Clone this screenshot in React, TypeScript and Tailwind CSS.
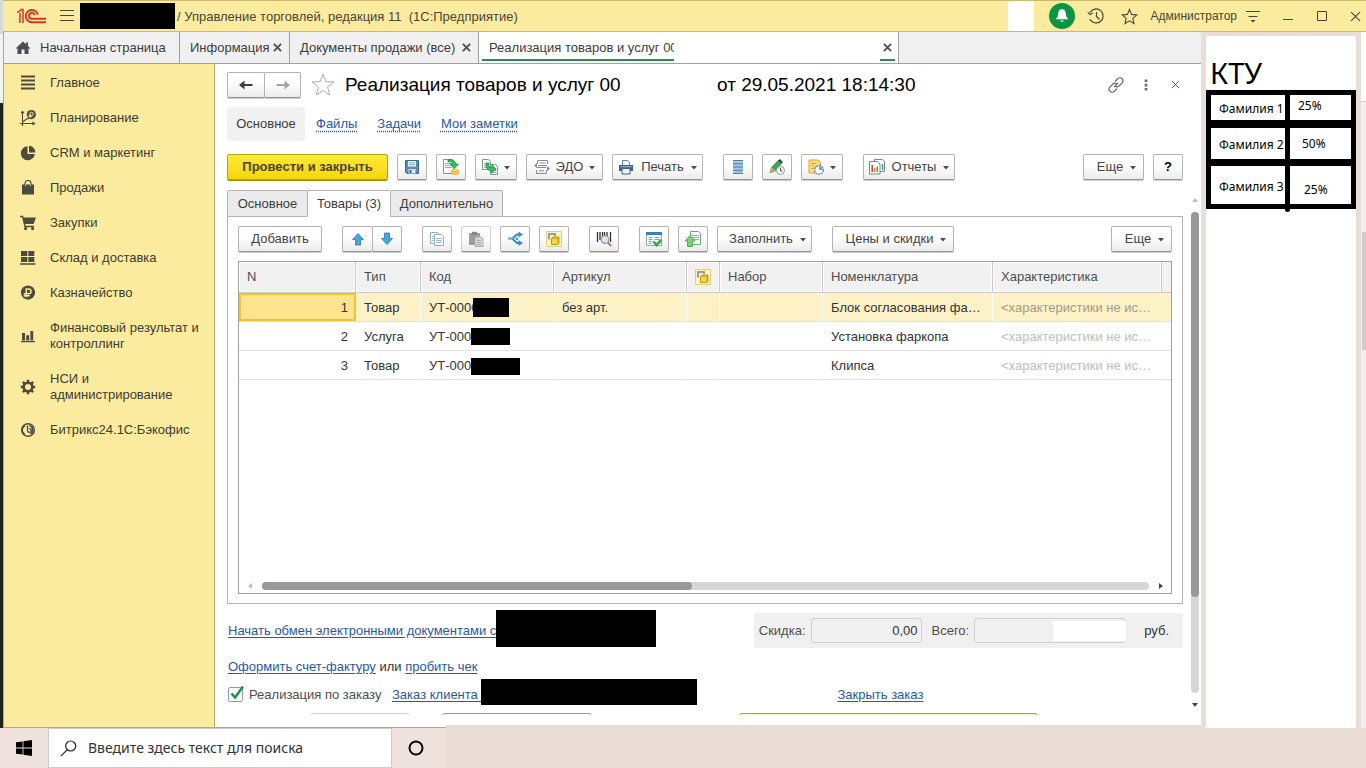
import React, { type ReactNode } from "react";

const Svg = ({ children, size = 16, box = 16, className = "" }: { children: ReactNode; size?: number; box?: number; className?: string }) => (
  <svg width={size} height={size} viewBox={`0 0 ${box} ${box}`} fill="none" className={`shrink-0 ${className}`} aria-hidden="true">
    {children}
  </svg>
);

const Logo = () => (
  <svg width="30" height="16" viewBox="0 0 30 16" fill="none" stroke="#d0392b" strokeWidth="1.9" className="shrink-0" aria-hidden="true">
    <path d="M0 4.600 3.800 2.200M2.900 4.800V15M3.200 1.600H6V15" strokeWidth="1.500" />
    <path d="M20.800 6.800A6.100 6.100 0 1 0 14.800 14.200H29" />
    <path d="M17.700 7.200A2.900 2.900 0 1 0 14.800 10.800H29" />
  </svg>
);

const Cross = ({ size = 9, width = 2, color = "#4d4d4d" }: { size?: number; width?: number; color?: string }) => (
  <Svg size={size} box={10}>
    <path d="M1 1 9 9M9 1 1 9" stroke={color} strokeWidth={width} />
  </Svg>
);

const Caret = () => (
  <svg width="6" height="4" viewBox="0 0 6 4" className="mt-[2px] shrink-0" aria-hidden="true">
    <path d="M0 0h6L3 3.6z" fill="#4a4a4a" />
  </svg>
);

const Ruble = ({ x, y, r, bg }: { x: number; y: number; r: number; bg: string }) => (
  <g>
    <circle cx={x} cy={y} r={r} fill="#4d4a42" />
    <path
      d={`M${x - r * 0.25} ${y + r * 0.65}V${y - r * 0.5}h${r * 0.35}a${r * 0.3} ${r * 0.3} 0 0 1 0 ${r * 0.66}H${x - r * 0.6}M${x - r * 0.6} ${y + r * 0.45}h${r * 0.85}`}
      stroke={bg}
      strokeWidth={r * 0.2}
    />
  </g>
);

const Y = "#faeb9e";
const D = "#4d4a42";

const sections: { label: string; icon: ReactNode }[] = [
  { label: "Главное", icon: <path d="M1 1.500h14M1 5.500h14M1 9.500h14M1 13.500h14" stroke={D} strokeWidth="1.9" /> },
  {
    label: "Планирование",
    icon: (
      <>
        <path d="M2.5 1.5V16M0 13.5h14M2.5 12l4-3 3-.5" stroke={D} strokeWidth="1.1" />
        <path d="M.3 3.2 2.5.5l2.2 2.7zM12.5 11.3l3 2.2-3 2.2z" fill={D} />
        <Ruble x={11.3} y={4.6} r={4.6} bg={Y} />
      </>
    ),
  },
  {
    label: "CRM и маркетинг",
    icon: (
      <>
        <path d="M7.5 1.3a7 7 0 1 0 7.3 7.6H7.5z" fill={D} />
        <path d="M9 .8V7.4h6.4A6.8 6.8 0 0 0 9 .8z" fill={D} />
      </>
    ),
  },
  {
    label: "Продажи",
    icon: (
      <>
        <path d="M2 4.500h12v10H2z" fill={D} />
        <path d="M5 6.500V3.500a3 3 0 0 1 6 0v3" stroke={D} strokeWidth="1.1" />
        <path d="M5.5 4.500v2M10.5 4.500v2" stroke={Y} strokeWidth=".7" />
      </>
    ),
  },
  {
    label: "Закупки",
    icon: (
      <>
        <path d="M3 2.6h13L13.6 9H4.8z" fill={D} />
        <path d="M0 1.5h2.6l2.4 10h9" stroke={D} strokeWidth="1.3" />
        <circle cx="5.6" cy="13.6" r="1.6" fill={D} />
        <circle cx="12.6" cy="13.6" r="1.6" fill={D} />
      </>
    ),
  },
  {
    label: "Склад и доставка",
    icon: <path d="M1 1h6.300v5H1zM8.300 1h6v5h-6zM1 7h6.300v5H1zM8.300 7h6v5h-6zM0 13.200h15.500v1.600H0z" fill={D} />,
  },
  { label: "Казначейство", icon: <Ruble x={8} y={7.6} r={7.1} bg={Y} /> },
  {
    label: "Финансовый результат и контроллинг",
    icon: <path d="M2 5h3v7.500H2zM6.200 7.300h3v5.200h-3zM10.400 3h2.800v9.500h-2.800zM1 13h14v1.300H1z" fill={D} />,
  },
  {
    label: "НСИ и администрирование",
    icon: (
      <>
        <circle cx="8" cy="8" r="4.3" stroke={D} strokeWidth="2.6" />
        <path d="M8 .8v2.4M8 12.8v2.4M.8 8h2.4M12.8 8h2.4M2.9 2.9l1.7 1.7M11.4 11.4l1.7 1.7M2.9 13.1l1.7-1.7M11.4 4.6l1.7-1.7" stroke={D} strokeWidth="2.5" />
      </>
    ),
  },
  {
    label: "Битрикс24.1С:Бэкофис",
    icon: (
      <>
        <circle cx="8" cy="8" r="6.3" stroke={D} strokeWidth="1.5" />
        <path d="M7.500 3.600v4.600a1.900 1.900 0 1 0 1.600-1.600M5 3.600a5 5 0 0 0-.2 8.800M9.400 3.600a4.600 4.600 0 0 1 1 8.400" stroke={D} strokeWidth="1.300" />
      </>
    ),
  },
];

const btn =
  "flex h-[26px] shrink-0 items-center justify-center rounded-[2px] border border-[#b3b3b3] border-b-[#959595] bg-linear-to-b from-white from-40% to-[#ececec] text-[#444] shadow-[0_1px_0_#ccc]";

const IconButton = ({ label, children, className = "" }: { label: string; children: ReactNode; className?: string }) => (
  <button type="button" aria-label={label} className={`${btn} w-[30px] ${className}`}>
    <Svg>{children}</Svg>
  </button>
);

const TextButton = ({ children, className }: { children: ReactNode; className: string }) => (
  <button type="button" className={`${btn} ${className}`}>
    {children}
  </button>
);

const Cubes = () => (
  <>
    <path d="M.5.5h15v15H.5z" fill="#fff3c4" stroke="#e3cd7c" />
    <path d="M3 8.500V3h6v2" stroke="#9b9b9b" strokeWidth="2" />
    <path d="M5.5 7.500 7 6h6v6l-1.500 1.500h-6z" fill="#e9b914" stroke="#a8860f" strokeWidth=".8" />
    <path d="M6.200 8.200h4.800v4.700H6.200z" fill="#ffd84a" />
  </>
);

const Doc = ({ x = 1, y = 1, w = 9, h = 12, c = "#7d929e", fill = "#fff" }: { x?: number; y?: number; w?: number; h?: number; c?: string; fill?: string }) => (
  <g stroke={c}>
    <path d={`M${x + 0.5} ${y + 0.5}h${w - 3}l2 2v${h - 3}h-${w - 1}z`} fill={fill} />
    <path d={`M${x + 2} ${y + 4.5}h${w - 4}M${x + 2} ${y + 6.5}h${w - 4}M${x + 2} ${y + 8.5}h${w - 4}`} strokeWidth=".8" />
  </g>
);

const link = "text-[#2a58a6] underline underline-offset-2";

const rows = [
  { n: 1, type: "Товар", code: "УТ-0000", clip: "w-[44px]", mask: "h-[19px] w-[36px]", art: "без арт.", name: "Блок согласования фа…" },
  { n: 2, type: "Услуга", code: "УТ-000", clip: "", mask: "h-[17px] w-[39px]", art: "", name: "Установка фаркопа" },
  { n: 3, type: "Товар", code: "УТ-000", clip: "", mask: "mt-[3px] h-[17px] w-[49px]", art: "", name: "Клипса" },
];

const TitleBar = () => (
  <header className="flex h-8 shrink-0 items-center border-y border-[#c9b96c] bg-[#faeb9e] pr-[5px] pl-[14px] text-[#4a4636]">
    <Logo />
    <button type="button" aria-label="Меню" className="ml-[12px]">
      <Svg>
        <path d="M1 2.500h14M1 7.500h14M1 12.500h14" stroke="#4a4636" />
      </Svg>
    </button>
    <div className="ml-[5px] h-[26px] w-[95px] bg-black" />
    <h1 className="ml-[2px] pt-[2px] text-[13px] whitespace-pre">/ Управление торговлей, редакция 11  (1С:Предприятие)</h1>
    <div className="ml-auto h-[30px] w-[26px] bg-white" />
    <button type="button" aria-label="Уведомления" className="ml-[15px] flex size-[26px] items-center justify-center rounded-full bg-[#0b9444]">
      <Svg>
        <path d="M8 1.200c-3 0-3.700 2.300-3.900 4.800C4 9 2.800 9.800 1.600 11.300h12.800C13.200 9.800 12 9 11.900 6 11.700 3.500 11 1.200 8 1.200zM6.200 12.500a1.900 1.900 0 0 0 3.600 0z" fill="#fff" />
      </Svg>
    </button>
    <button type="button" aria-label="История" className="ml-[12px]">
      <Svg size={18} box={18}>
        <path d="M3 5.500A7 7 0 1 1 2.800 12M9.500 5v4.500l3 3M.8 5l2 2.500L5.800 6" stroke="#4a4636" strokeWidth="1.200" />
      </Svg>
    </button>
    <button type="button" aria-label="Избранное" className="ml-[16px]">
      <Svg size={17} box={17}>
        <path d="m8.500 1.500 2.100 4.900 5.200.5-4 3.500 1.200 5.200-4.500-2.800L4 15.600l1.200-5.200-4-3.500 5.200-.5z" stroke="#4a4636" strokeWidth="1.100" />
      </Svg>
    </button>
    <span className="ml-[12px] text-[12px]">Администратор</span>
    <button type="button" aria-label="Сервис" className="ml-[8px]">
      <Svg>
        <path d="M1 3.500h14M3.500 8.500h9" stroke="#4a4636" strokeWidth="1.200" />
        <path d="M5.500 12h5L8 14.600z" fill="#4a4636" />
      </Svg>
    </button>
    <button type="button" aria-label="Свернуть" className="ml-[22px]">
      <Svg size={10} box={10}>
        <path d="M0 8.500h10" stroke="#4a4636" />
      </Svg>
    </button>
    <button type="button" aria-label="Развернуть" className="ml-[24px]">
      <Svg size={10} box={10}>
        <path d="M.5.500h9v9h-9z" stroke="#4a4636" />
      </Svg>
    </button>
    <button type="button" aria-label="Закрыть" className="ml-[23px]">
      <Cross size={11} width={1} color="#4a4636" />
    </button>
  </header>
);

const WindowTabs = () => (
  <nav className="flex h-8 shrink-0 items-stretch border-b border-[#a0a0a0] bg-[#f0f0f0] text-[#3c3c3c]">
    <button type="button" className="flex w-[176px] items-center gap-[9px] border-r border-[#a0a0a0] pl-[11px]">
      <Svg>
        <path d="M8 1.500.500 8.500h2V14H6.500V9.500h3V14h4V8.500h2L13 6V2.500h-2v1.700z" fill="#4d4d4d" />
      </Svg>
      Начальная страница
    </button>
    <button type="button" className="flex w-[110px] items-center justify-between border-r border-[#a0a0a0] pr-[7px] pl-[10px]">
      Информация <Cross />
    </button>
    <button type="button" className="flex w-[189px] items-center justify-between border-r border-[#a0a0a0] pr-[7px] pl-[10px] whitespace-nowrap">
      Документы продажи (все) <Cross />
    </button>
    <button type="button" className="flex w-[420px] items-stretch justify-between border-r border-[#a0a0a0] bg-white pr-[3px] pb-[2px] pl-[3px]">
      <span className="flex w-[192px] items-center overflow-hidden border-b-2 border-[#2b8a57] pt-[4px] pl-[7px] text-left whitespace-nowrap">Реализация товаров и услуг 00</span>
      <span className="flex w-[15px] items-center justify-center border-b-2 border-[#2b8a57] pt-[4px]">
        <Cross />
      </span>
    </button>
  </nav>
);

const Sidebar = () => (
  <nav className="flex w-[211px] shrink-0 flex-col gap-[19px] border-r border-b border-[#b9ab62] bg-[#faeb9e] pt-[11px] pl-[16px]">
    {sections.map((s) => (
      <a key={s.label} href="#" className="flex items-center gap-[14px] pr-[9px] leading-4 text-[#3f3c30]">
        <Svg>{s.icon}</Svg>
        <span>{s.label}</span>
      </a>
    ))}
  </nav>
);

const CommandBar = () => (
  <div className="mt-[13px] flex items-center gap-[9px]">
    <button type="button" className="h-[26px] w-[161px] shrink-0 rounded-[2px] border border-[#bca100] bg-linear-to-b from-[#ffe933] to-[#f5d800] text-[13px] font-bold whitespace-nowrap text-[#4a4420] shadow-[0_1px_0_#a08a10]">
      Провести и закрыть
    </button>
    <IconButton label="Записать">
      <path d="M1.500 1.500h13v13H3l-1.500-1.500z" fill="#5b8cc0" stroke="#3a658f" />
      <path d="M4 2h8v5.500H4z" fill="#e8f1fa" />
      <path d="M5 3.800h6M5 5.500h6" stroke="#8fb0cf" />
      <path d="M4.500 10h7v4.500h-7z" fill="#dce6ee" />
      <path d="M5.500 11h2v3h-2z" fill="#3a658f" />
    </IconButton>
    <IconButton label="Провести">
      <Doc x={0} y={0} w={11} h={15} />
      <path d="M5 .800c4-1 7.500.5 7.500 4.200h3L11.200 9.500 7.200 5h2.300c0-1.800-1.500-2.500-4.500-2z" fill="#2fbf57" stroke="#138a3c" strokeWidth=".7" />
      <ellipse cx="12" cy="11.500" rx="3.500" ry="1.300" fill="#ffe477" stroke="#d3a92c" strokeWidth=".7" />
      <path d="M8.500 11.500v3c0 1.400 7 1.400 7 0v-3c0 1.400-7 1.400-7 0z" fill="#f7c948" stroke="#d3a92c" strokeWidth=".6" />
    </IconButton>
    <TextButton className="w-[42px] gap-[6px]">
      <Svg>
        <Doc x={0} y={0} w={9} h={11} />
        <Doc x={8} y={5} w={8} h={11} />
        <path d="M4 4h3v4h3V5.500l4 5-5 3.500v-2.500C6 11.500 4 10 4 4z" fill="#35bd5c" stroke="#168a3d" strokeWidth=".7" />
      </Svg>
      <Caret />
    </TextButton>
    <TextButton className="w-[77px] gap-[6px]">
      <Svg>
        <path d="M3.500 5V1.500h10V5M2.500 11v3.500h10V11M5.500 4h6M4 6.500h9M3 8.500h9M5 11.800h5" stroke="#8a8a8a" />
        <path d="M0 6.500 3 4v5zM16 9.500 13 7v5z" fill="#8a8a8a" />
      </Svg>
      ЭДО
      <Caret />
    </TextButton>
    <TextButton className="w-[91px] gap-[7px]">
      <Svg>
        <path d="M4.500 6V1.500h5l2 2V6" fill="#fff" stroke="#5f7f9e" />
        <path d="M1 6h14v6H1z" fill="#3b6590" />
        <path d="M2.500 7.700h11" stroke="#9cb9d4" />
        <path d="M4 9.500h8V15H4z" fill="#e9f0f6" stroke="#3b6590" />
      </Svg>
      Печать
      <Caret />
    </TextButton>
    <IconButton label="Структура" className="ml-[11px]">
      <path d="M3 1h10v14H3z" fill="#a9c6df" />
      <path d="M3 1.500h10M3 4.800h10M3 8h10M3 11.300h10M3 14.500h10" stroke="#4f7ea8" />
    </IconButton>
    <IconButton label="Запланировать">
      <path d="m1 13.500 1.500-5L9 1.500l3.500 3-6.500 7.500z" fill="#3fa650" stroke="#2a7136" strokeWidth=".6" />
      <path d="m1 13.500 1.500-5 3.500 3z" fill="#e2a566" />
      <path d="M9 1.500 10.800 0 14 3l-1.500 1.500z" fill="#3e3e3e" />
      <circle cx="11.500" cy="11.500" r="4" fill="#fff" stroke="#8796a3" />
      <path d="M11.500 9v3h2" stroke="#555" />
    </IconButton>
    <TextButton className="w-[42px] gap-[6px]">
      <Svg>
        <path d="M1 1h9l2.500 2.500V14H1z" fill="#ffdf80" stroke="#d6a62b" />
        <path d="M3 4.500h5M3 7h4M3 9.500h3" stroke="#d6a62b" />
        <circle cx="11" cy="11" r="4.300" fill="#fff" stroke="#4b74a8" strokeWidth="1.200" strokeDasharray="2 .8" />
        <path d="M11 11V7.500A3.500 3.500 0 0 1 14.500 11z" fill="#6aa1d9" />
      </Svg>
      <Caret />
    </TextButton>
    <TextButton className="ml-[11px] w-[92px] gap-[7px]">
      <Svg>
        <path d="M5.500.500h8l2 2v10h-10z" fill="#fff" stroke="#6c8b9b" />
        <path d="M13.500 5v6" stroke="#4aa657" strokeWidth="1.500" />
        <path d="M.5 2.500h8l2.500 2.500v10H.500z" fill="#fff" stroke="#6c8b9b" />
        <path d="M3.200 13V6" stroke="#df3b3b" strokeWidth="1.600" />
        <path d="M5.800 13V9" stroke="#f08c3a" strokeWidth="1.600" />
        <path d="M8.300 13V7.500" stroke="#3fa650" strokeWidth="1.600" />
      </Svg>
      Отчеты
      <Caret />
    </TextButton>
    <TextButton className="ml-auto w-[61px] gap-[7px] pl-[6px]">
      Еще
      <Caret />
    </TextButton>
    <TextButton className="w-[30px] font-bold text-black">?</TextButton>
  </div>
);

const TableBar = () => (
  <div className="flex items-center gap-[9px]">
    <TextButton className="w-[84px]">Добавить</TextButton>
    <div className="ml-[11px] flex">
      <button type="button" aria-label="Вверх" className={`${btn} w-[31px]`}>
        <Svg>
          <path d="M8 2.500 13.500 8.500h-3V14h-5V8.500h-3z" fill="#3fa9e8" stroke="#2679b5" strokeWidth=".8" />
        </Svg>
      </button>
      <button type="button" aria-label="Вниз" className={`${btn} -ml-px w-[30px]`}>
        <Svg>
          <path d="M8 13.500 2.500 7.500h3V2h5v5.500h3z" fill="#3fa9e8" stroke="#2679b5" strokeWidth=".8" />
        </Svg>
      </button>
    </div>
    <IconButton label="Скопировать" className="ml-[11px]">
      <Doc x={1} y={1} w={10} h={12} c="#8fb0bd" />
      <Doc x={5} y={3} w={10} h={12} c="#8fb0bd" />
    </IconButton>
    <IconButton label="Вставить" className="border-[#d0d0d0]">
      <path d="M1 2h11v12H1z" fill="#a29b96" />
      <path d="M4 .800h5v3H4z" fill="#8a8582" />
      <path d="M7 6h6l2 2v7.500H7z" fill="#d5d9de" stroke="#a4aab2" />
      <path d="M9 9.500h4M9 11.500h4M9 13.500h4" stroke="#a4aab2" />
    </IconButton>
    <IconButton label="Разбить">
      <path d="M1 7.500h4.500L10 3.500h3M5 7.500 10 12h3" stroke="#2f8bc9" strokeWidth="2" />
      <path d="M11.500.500 15.800 3.500l-4.300 3zM11.500 9l4.300 3-4.300 3z" fill="#2f8bc9" />
      <path d="M1 7.500h7" stroke="#7cc0ea" strokeWidth=".8" />
      <circle cx="10" cy="7.700" r="1.200" fill="#2f8bc9" />
    </IconButton>
    <IconButton label="Наборы">
      <Cubes />
    </IconButton>
    <IconButton label="Поиск по штрихкоду" className="ml-[11px]">
      <path d="M1.500 1v10M4 1v8M6.500 1v4M8.500 1v3M11 1v4M14.500 1v10" stroke="#333" strokeWidth="1.300" />
      <circle cx="9" cy="8.500" r="3.900" fill="#dde6ef" stroke="#8b97a5" strokeWidth="1.100" />
      <path d="m12 11.500 3 3.500" stroke="#a8673c" strokeWidth="1.800" />
    </IconButton>
    <IconButton label="Проверить" className="ml-[11px]">
      <path d="M.500 1.500h15v13H.500z" fill="#fff" stroke="#8fa3b5" />
      <path d="M0 1h16v3H0z" fill="#3c7fc0" />
      <path d="M2.500 6.500h4M2.500 8.500h4M2.500 10.500h4M2.500 12.500h3" stroke="#9a9a9a" />
      <path d="M8.500 6.500h5M8.500 8.500h5" stroke="#e2797b" />
      <path d="m7.500 10.500 3 3.500 4.800-5" stroke="#3aa64a" strokeWidth="2.600" />
    </IconButton>
    <IconButton label="Загрузить">
      <Doc x={5} y={0} w={11} h={14} c="#63b065" />
      <path d="M5 4.500 9.800 10H7.500v5.500h-5V10H.200z" fill="#7ed36a" stroke="#3c9a3d" strokeWidth=".8" />
    </IconButton>
    <TextButton className="w-[95px] gap-[7px] pl-[6px]">
      Заполнить
      <Caret />
    </TextButton>
    <TextButton className="ml-[11px] w-[122px] gap-[7px] pl-[6px] whitespace-nowrap">
      Цены и скидки
      <Caret />
    </TextButton>
    <TextButton className="ml-auto w-[61px] gap-[7px] pl-[6px]">
      Еще
      <Caret />
    </TextButton>
  </div>
);

const th = "h-[31px] border-r border-b border-[#c9c9c9] bg-[#f1f1f1] px-2 text-left font-normal text-[#4d4d4d] overflow-hidden shadow-[inset_0_0_0_1px_#fff]";

const GoodsTable = () => (
  <table className="w-full table-fixed border-separate border-spacing-0">
    <colgroup>
      <col className="w-[117px]" />
      <col className="w-[65px]" />
      <col className="w-[133px]" />
      <col className="w-[133px]" />
      <col className="w-[33px]" />
      <col className="w-[103px]" />
      <col className="w-[170px]" />
      <col className="w-[169px]" />
      <col />
    </colgroup>
    <thead>
      <tr>
        <th className={th}>N</th>
        <th className={th}>Тип</th>
        <th className={th}>Код</th>
        <th className={th}>Артикул</th>
        <th className={th} aria-label="Комплект">
          <Svg>
            <Cubes />
          </Svg>
        </th>
        <th className={th}>Набор</th>
        <th className={th}>Номенклатура</th>
        <th className={th}>Характеристика</th>
        <th className="border-b border-[#c9c9c9] bg-[#f1f1f1]" />
      </tr>
    </thead>
    <tbody>
      {rows.map((r) => {
        const sel = r.n === 1;
        const td = `h-[29px] overflow-hidden whitespace-nowrap border-b border-[#e2e2e2] px-2 pt-[2px] ${sel ? "border-r border-r-white bg-[#fdf1c8]" : "border-r border-r-transparent"}`;
        return (
          <tr key={r.n} className="text-[#333]">
            <td className={`h-[29px] border-b border-[#e2e2e2] px-2 pt-[2px] text-right ${sel ? "bg-[#ffe48e] shadow-[inset_0_0_0_2px_#f2c42c]" : ""}`}>{r.n}</td>
            <td className={td}>{r.type}</td>
            <td className={`h-[29px] border-b border-[#e2e2e2] px-2 whitespace-nowrap ${sel ? "border-r border-r-white bg-[#fdf1c8]" : "border-r border-r-transparent"}`}>
              <div className="flex items-center">
                <span className={`overflow-hidden pt-[2px] ${r.clip}`}>{r.code}</span>
                <span className={`bg-black ${r.mask}`} />
              </div>
            </td>
            <td className={td}>{r.art}</td>
            <td className={td} />
            <td className={td} />
            <td className={td}>{r.name}</td>
            <td className={`${td} ${sel ? "text-[#a39b82]" : "text-[#bdbdbd]"}`}>&lt;характеристики не ис…</td>
            <td className={`border-b border-[#e2e2e2] ${sel ? "bg-[#fdf1c8]" : ""}`} />
          </tr>
        );
      })}
    </tbody>
  </table>
);

const DocumentForm = () => (
  <main className="flex min-w-0 flex-1 flex-col">
    <div className="flex min-h-0 flex-1">
      <div className="flex min-w-0 flex-1 flex-col pl-[12px]">
        <div className="mt-[8px] flex h-[25px] items-center">
          <div className="flex">
            <button type="button" aria-label="Назад" className={`${btn} w-[38px]`}>
              <Svg>
                <path d="M2 8h12.500" stroke="#3d3d3d" strokeWidth="2" />
                <path d="M6.500 3.500v9L1 8z" fill="#3d3d3d" />
              </Svg>
            </button>
            <button type="button" aria-label="Вперед" className={`${btn} -ml-px w-[37px]`}>
              <Svg>
                <path d="M1.500 8H14" stroke="#a5a5a5" strokeWidth="2" />
                <path d="M9.500 3.500v9L15 8z" fill="#a5a5a5" />
              </Svg>
            </button>
          </div>
          <Svg size={24} box={24} className="ml-[10px]">
            <path d="m12 1 2.800 7.700 8.200.3-6.500 5 2.300 8L12 17.500 5.200 22l2.300-8L1 9l8.200-.3z" stroke="#a9adb3" />
          </Svg>
          <h2 className="ml-[10px] w-[372px] text-[19px] whitespace-nowrap text-black">Реализация товаров и услуг 00</h2>
          <span className="text-[19px] whitespace-nowrap text-black">от 29.05.2021 18:14:30</span>
          <button type="button" aria-label="Ссылка" className="ml-auto">
            <Svg>
              <g stroke="#666" strokeWidth="1.200">
                <path d="m7 4.500 2.500-2.700a2.900 2.900 0 0 1 4.500 0 2.900 2.900 0 0 1 .2 4L11 9a2.900 2.900 0 0 1-3.500.3" />
                <path d="M9 11.500l-2.500 2.700a2.900 2.900 0 0 1-4.500 0 2.900 2.900 0 0 1-.2-4L5 7a2.900 2.900 0 0 1 3.500-.3M6 10l4-4" />
              </g>
            </Svg>
          </button>
          <button type="button" aria-label="Действия" className="ml-[14px]">
            <Svg>
              <path d="M6.700 2.500h2.600v2.600H6.700zM6.700 6.800h2.600v2.600H6.700zM6.700 11h2.600v2.600H6.700z" fill="#666" />
            </Svg>
          </button>
          <button type="button" aria-label="Закрыть документ" className="mr-[21px] ml-[17px]">
            <Cross size={9} width={1} color="#444" />
          </button>
        </div>

        <nav className="mt-[10px] flex h-[34px] items-center gap-[20px]">
          <span className="-mr-[9px] flex h-full w-[78px] items-center justify-center rounded-[3px] bg-[#f1f1f1] text-[#3c3c3c]">Основное</span>
          <a href="#" className="text-[#2a58a6] underline decoration-dotted underline-offset-3">Файлы</a>
          <a href="#" className="text-[#2a58a6] underline decoration-dotted underline-offset-3">Задачи</a>
          <a href="#" className="text-[#2a58a6] underline decoration-dotted underline-offset-3">Мои заметки</a>
        </nav>

        <div className="pr-[18px]">
          <CommandBar />
        </div>

        <div className="flex min-h-0 flex-1 pt-[10px]">
          <div className="flex min-w-0 flex-1 flex-col pr-[6px]">
            <div className="flex h-[27px] shrink-0 text-[#3c3c3c]" role="tablist">
              <button type="button" role="tab" className="w-[81px] rounded-t-[2px] border border-[#b3b3b3] bg-[#ebebeb]">Основное</button>
              <button type="button" role="tab" aria-selected="true" className="w-[82px] border-t border-[#b3b3b3] bg-white">Товары (3)</button>
              <button type="button" role="tab" className="w-[113px] rounded-t-[2px] border border-[#b3b3b3] bg-[#ebebeb]">Дополнительно</button>
              <div className="flex-1 border-b border-[#b3b3b3]" />
            </div>
            <section className="flex min-h-0 flex-1 flex-col border border-t-0 border-[#b3b3b3] p-[10px] pt-[9px] pb-[9px]">
              <TableBar />
              <div className="mt-[9px] flex min-h-0 flex-1 flex-col border border-[#a0a0a0]">
                <GoodsTable />
                <div className="mt-auto flex h-[14px] items-center pr-[8px] pl-[9px]">
                  <svg width="4" height="6" viewBox="0 0 4 6" aria-hidden="true">
                    <path d="M4 0v6L0 3z" fill="#bbb" />
                  </svg>
                  <div className="mx-[10px] h-2 flex-1 rounded-full bg-[#d6d6d6]">
                    <div className="h-2 w-[430px] rounded-full bg-[#999]" />
                  </div>
                  <svg width="4" height="6" viewBox="0 0 4 6" aria-hidden="true">
                    <path d="M0 0v6l4-3z" fill="#444" />
                  </svg>
                </div>
              </div>
            </section>

            <div className="mt-[5px] flex h-[43px] shrink-0 items-center">
              <a href="#" className={`${link} ml-px whitespace-nowrap`}>Начать обмен электронными документами с</a>
              <div className="-mt-[4px] h-[37px] w-[160px] bg-black" />
              <div className="ml-auto flex h-[35px] items-center bg-[#f0f0f0] pr-[14px] pl-[5px] text-[#4d4d4d]">
                <label htmlFor="discount">Скидка:</label>
                <input id="discount" readOnly value="0,00" className="ml-[5px] h-[25px] w-[111px] rounded-[3px] border border-[#d0d0d0] bg-[#f0f0f0] pr-[3px] text-right text-[#333]" />
                <label htmlFor="total" className="ml-[10px]">Всего:</label>
                <div className="relative ml-[5px] w-[152px]">
                  <input id="total" readOnly value="" className="block h-[25px] w-full rounded-[3px] border border-[#d0d0d0] bg-[#f0f0f0]" />
                  <div className="absolute top-[3px] right-0 h-[20px] w-[73px] bg-white" />
                </div>
                <span className="ml-[18px] text-[#333]">руб.</span>
              </div>
            </div>
            <p className="mt-[6px] ml-px h-[18px] shrink-0 leading-[18px] text-[#333]">
              <a href="#" className={link}>Оформить счет-фактуру</a> или <a href="#" className={link}>пробить чек</a>
            </p>
            <div className="mt-[5px] ml-px flex h-[27px] shrink-0 items-center">
              <label className="flex w-[164px] items-center gap-[6px] whitespace-nowrap text-[#4d4d4d]">
                <span className="relative block size-[15px]">
                  <input type="checkbox" defaultChecked className="block size-[15px] appearance-none rounded-[2px] border border-[#999] bg-white" />
                  <Svg className="pointer-events-none absolute -top-[2px] left-px">
                    <path d="m2.500 8.500 3.500 4 8-11" stroke="#159447" strokeWidth="2.400" />
                  </Svg>
                </span>
                Реализация по заказу
              </label>
              <a href="#" className={`${link} whitespace-pre`}>{"Заказ клиента "}</a>
              <div className="mb-[6px] h-[26px] w-[216px] bg-black" />
              <a href="#" className={`${link} ml-[140px] whitespace-nowrap`}>Закрыть заказ</a>
            </div>
            <div className="mt-[5px] flex h-[2px] shrink-0 overflow-hidden pl-[83px]">
              <input aria-label="Валюта" readOnly className="h-6 w-[100px] shrink-0 rounded-[3px] border border-[#d0d0d0]" />
              <select aria-label="Налогообложение" className="ml-[32px] h-6 w-[150px] shrink-0 appearance-none rounded-[3px] border border-[#999]" />
              <select aria-label="Состояние" className="ml-[147px] h-6 w-[299px] shrink-0 appearance-none rounded-[3px] border border-[#999] bg-[#fdf1c8]" />
            </div>
            <div className="h-[10px] shrink-0" />
          </div>

          <div className="flex w-[12px] shrink-0 flex-col items-center pt-[8px] pb-[18px]">
            <svg width="6" height="4" viewBox="0 0 6 4" className="shrink-0" aria-hidden="true">
              <path d="M0 4h6L3 0z" fill="#bbb" />
            </svg>
            <div className="mt-[10px] w-2 flex-1 rounded-full bg-[#d6d6d6]">
              <div className="h-[80%] w-2 rounded-full bg-[#999]" />
            </div>
            <svg width="6" height="4" viewBox="0 0 6 4" className="mt-[10px] shrink-0" aria-hidden="true">
              <path d="M0 0h6L3 4z" fill="#444" />
            </svg>
          </div>
        </div>
      </div>
    </div>
    <div className="flex h-[3px] shrink-0">
      <div className="w-[231px] border-b border-[#b9ab62]" />
      <div className="flex-1 bg-[#e9ddd6]" />
    </div>
  </main>
);

const ktuCell = "border-black border-r-[5px] bg-white p-0 whitespace-nowrap";

const KtuPanel = () => (
  <aside className="flex w-[165px] shrink-0 font-['Noto_Sans',sans-serif] text-black">
    <div className="flex min-w-0 flex-1 flex-col border-x-[5px] border-t-4 border-[#e9ddd6] bg-white">
      <h2 className="mt-[17px] ml-[4px] h-[37px] text-[29px] leading-[40px]">КТУ</h2>
      <table className="w-full table-fixed border-separate border-spacing-0 text-[12px] leading-4">
        <colgroup>
          <col className="w-[84px]" />
          <col />
        </colgroup>
        <tbody>
          <tr className="h-[38px]">
            <td className={`${ktuCell} border-t-[5px] border-b-8 border-l-[5px] pt-[2px] pl-[8px]`}>Фамилия 1</td>
            <td className={`${ktuCell} border-t-[5px] border-b-8 pb-[4px] pl-[8px]`}>25%</td>
          </tr>
          <tr className="h-[38px]">
            <td className={`${ktuCell} border-b-[7px] border-l-[5px] pt-[2px] pl-[8px]`}>Фамилия 2</td>
            <td className={`${ktuCell} border-b-[7px] pl-[12px]`}>50%</td>
          </tr>
          <tr className="h-[43px]">
            <td className={`${ktuCell} border-b-[5px] border-l-[5px] pt-[4px] pl-[8px]`}>Фамилия 3</td>
            <td className={`${ktuCell} border-b-[5px] pt-[9px] pl-[14px]`}>25%</td>
          </tr>
        </tbody>
      </table>
      <div className="ml-[79px] h-[3px] w-[5px] rounded-b-full bg-black" />
    </div>
    <div className="flex w-[5px] flex-col bg-[#f0f0f0]">
      <div className="h-[70px] border-b border-[#d0d0d0] bg-white" />
      <div className="mt-[130px] ml-px h-[118px] bg-[#cdcdcd]" />
    </div>
  </aside>
);

const Taskbar = () => (
  <footer className="flex h-10 shrink-0 items-stretch bg-[#e9ddd6]">
    <div className="flex w-[446px] items-stretch bg-[#efe2dc]">
      <button type="button" aria-label="Пуск" className="flex w-12 items-center justify-center">
        <Svg>
          <path d="M0 2.300 6.600 1.400V7.600H0zM7.400 1.300 16 0V7.600H7.400zM0 8.400h6.600v6.200L0 13.700zM7.400 8.400H16V16l-8.600-1.200z" fill="#000" />
        </Svg>
      </button>
      <label className="flex w-[344px] items-center gap-[11px] border border-[#ccc] bg-white pl-[11px]">
        <Svg size={17} box={17}>
          <circle cx="10.700" cy="6" r="5" stroke="#222" strokeWidth="1.200" />
          <path d="M7.200 9.800.800 16.200" stroke="#222" strokeWidth="1.200" />
        </Svg>
        <input
          type="text"
          aria-label="Поиск"
          placeholder="Введите здесь текст для поиска"
          className="min-w-0 flex-1 font-['Noto_Sans',sans-serif] text-[14px] placeholder:text-[#333] focus:outline-none"
        />
      </label>
      <button type="button" aria-label="Кортана" className="flex w-12 items-center justify-center">
        <Svg>
          <circle cx="8" cy="8" r="6.500" stroke="#000" strokeWidth="2" />
        </Svg>
      </button>
    </div>
  </footer>
);

export default function App() {
  return (
    <div className="flex h-screen min-h-[768px] flex-col overflow-hidden bg-white font-['Liberation_Sans',Arial,sans-serif] text-[13px] leading-4">
      <div className="flex min-h-0 flex-1">
        <div className="flex w-[3px] shrink-0 flex-col bg-[#222]">
          <div className="h-[34px] bg-[#d9d9d9]" />
          <div className="h-[69px] bg-[#f2f2f2]" />
        </div>
        <div className="flex min-w-0 flex-1 flex-col">
          <TitleBar />
          <div className="flex min-h-0 flex-1">
            <div className="flex min-w-0 flex-1 flex-col border-l border-[#b9ab62]">
              <WindowTabs />
              <div className="flex min-h-0 flex-1">
                <Sidebar />
                <DocumentForm />
              </div>
            </div>
            <KtuPanel />
          </div>
        </div>
      </div>
      <Taskbar />
    </div>
  );
}
